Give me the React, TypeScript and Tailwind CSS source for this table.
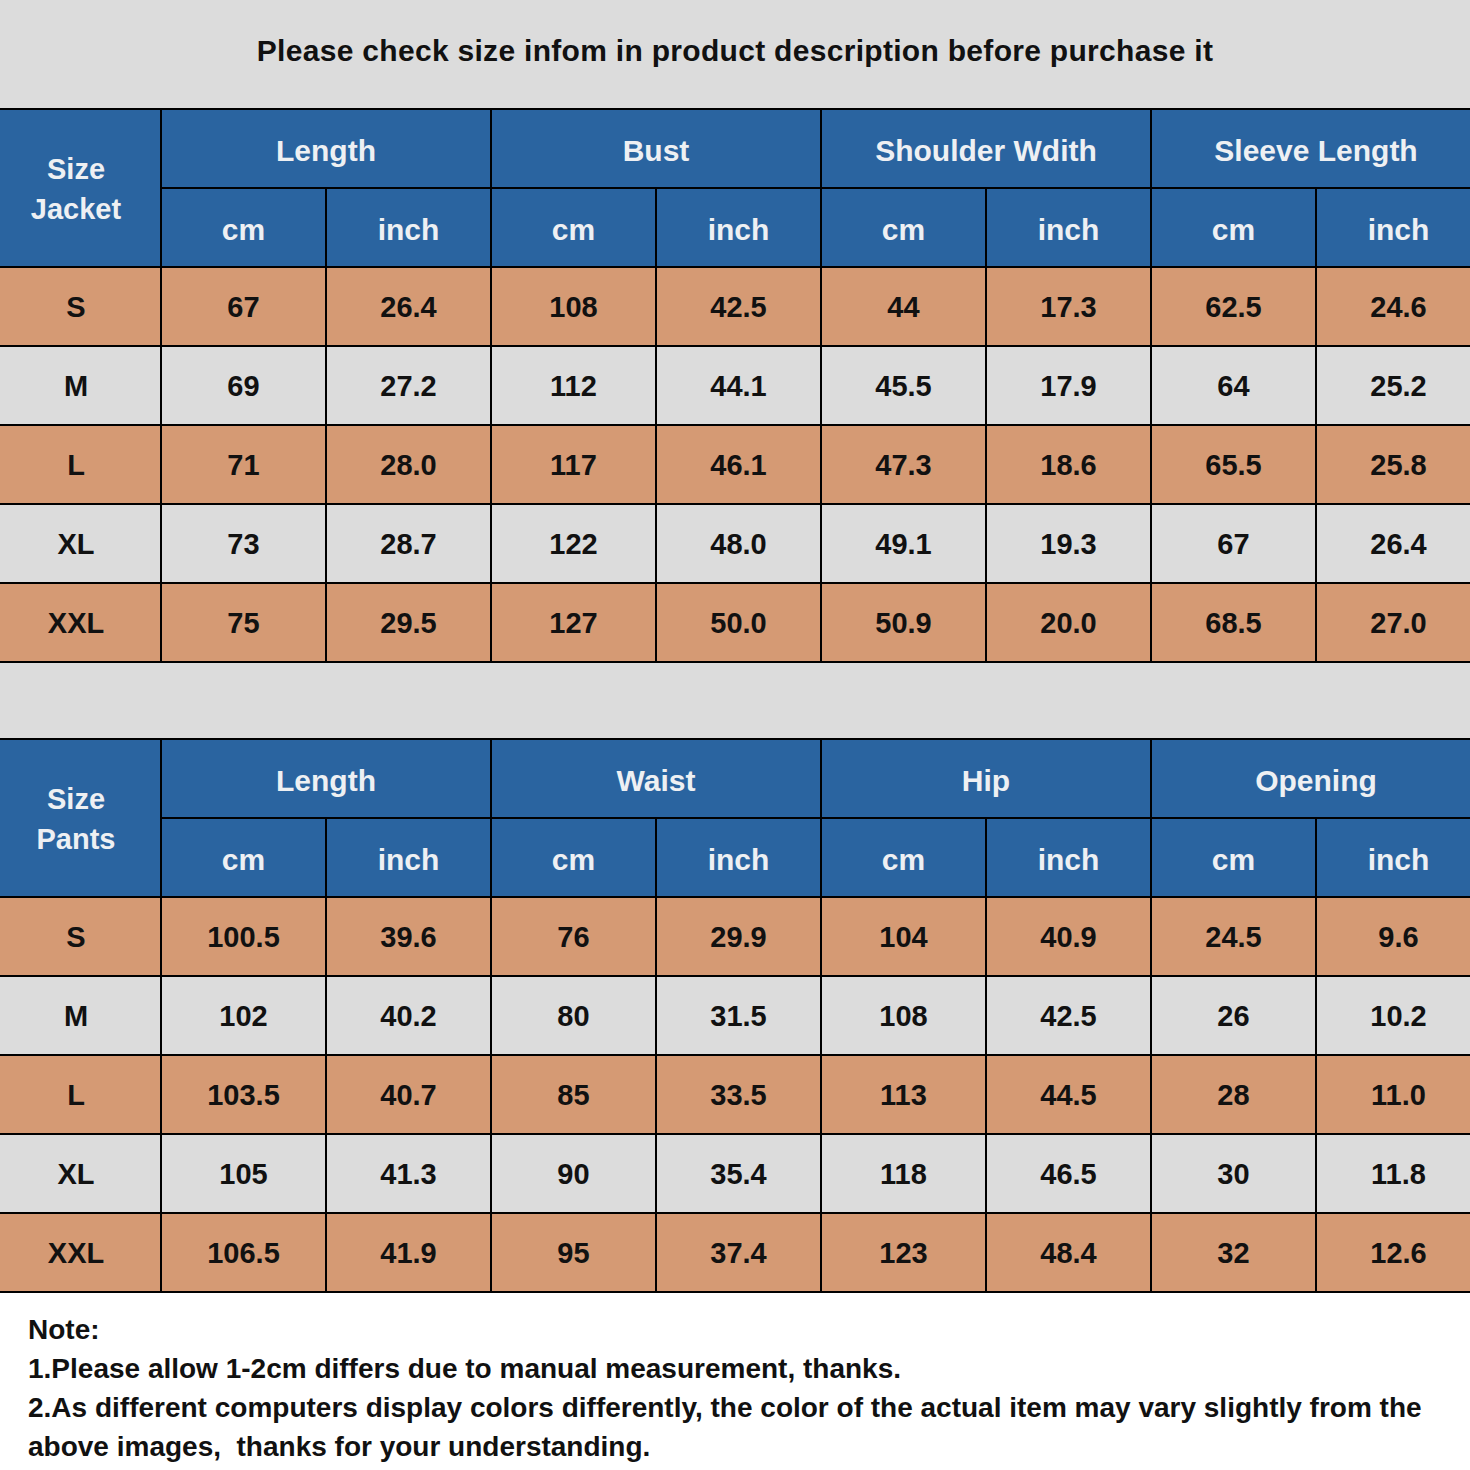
const jacketHeads = ["Length", "Bust", "Shoulder Wdith", "Sleeve Length"];
const pantsHeads = ["Length", "Waist", "Hip", "Opening"];

const jacketRows = [
  ["S", "67", "26.4", "108", "42.5", "44", "17.3", "62.5", "24.6"],
  ["M", "69", "27.2", "112", "44.1", "45.5", "17.9", "64", "25.2"],
  ["L", "71", "28.0", "117", "46.1", "47.3", "18.6", "65.5", "25.8"],
  ["XL", "73", "28.7", "122", "48.0", "49.1", "19.3", "67", "26.4"],
  ["XXL", "75", "29.5", "127", "50.0", "50.9", "20.0", "68.5", "27.0"],
];

const pantsRows = [
  ["S", "100.5", "39.6", "76", "29.9", "104", "40.9", "24.5", "9.6"],
  ["M", "102", "40.2", "80", "31.5", "108", "42.5", "26", "10.2"],
  ["L", "103.5", "40.7", "85", "33.5", "113", "44.5", "28", "11.0"],
  ["XL", "105", "41.3", "90", "35.4", "118", "46.5", "30", "11.8"],
  ["XXL", "106.5", "41.9", "95", "37.4", "123", "48.4", "32", "12.6"],
];

function SizeTable({ kind, heads, rows }: { kind: string; heads: string[]; rows: string[][] }) {
  return (
    <div className="w-[1470px] overflow-hidden">
      <div className="grid w-[1480px] grid-cols-[160px_repeat(8,163px)] auto-rows-[77px] gap-[2px] bg-black py-[2px] text-[29px] font-bold">
        <div className="row-span-2 flex flex-col items-center justify-center bg-[#2a64a0] pr-[8px] pt-[2px] leading-[40px] text-[#eef0f3]">
          <span>Size</span>
          <span>{kind}</span>
        </div>
        {heads.map((h) => (
          <div key={h} className="col-span-2 flex items-center justify-center bg-[#2a64a0] pt-[4px] text-[30px] text-[#eef0f3]">
            {h}
          </div>
        ))}
        {heads.map((h) => (
          <>
            <div key={h + "cm"} className="flex items-center justify-center bg-[#2a64a0] pt-[3px] text-[30px] text-[#eef0f3]">
              cm
            </div>
            <div key={h + "in"} className="flex items-center justify-center bg-[#2a64a0] pt-[3px] text-[30px] text-[#eef0f3]">
              inch
            </div>
          </>
        ))}
        {rows.map((r, i) =>
          r.map((c, j) => (
            <div
              key={i + "-" + j}
              className={`flex items-center justify-center pt-[2px] text-[#111] ${j === 0 ? "pr-[8px]" : ""} ${i % 2 === 0 ? "bg-[#d59a74]" : "bg-[#dcdcdc]"}`}
            >
              {c}
            </div>
          ))
        )}
      </div>
    </div>
  );
}

export default function App() {
  return (
    <div className="w-[1470px] h-[1470px] overflow-hidden bg-white font-['Liberation_Sans',Arial,sans-serif]">
      <div className="flex h-[108px] items-start justify-center bg-[#dcdcdc] pt-[28px] text-[30px] font-bold tracking-[0.3px] text-[#111]">
        Please check size infom in product description before purchase it
      </div>
      <SizeTable kind="Jacket" heads={jacketHeads} rows={jacketRows} />
      <div className="h-[75px] bg-[#dcdcdc]" />
      <SizeTable kind="Pants" heads={pantsHeads} rows={pantsRows} />
      <div className="px-[28px] pt-[17px] text-[28px] font-bold leading-[39px] text-[#111]">
        <div>Note:</div>
        <div>1.Please allow 1-2cm differs due to manual measurement, thanks.</div>
        <div>2.As different computers display colors differently, the color of the actual item may vary slightly from the</div>
        <div>above images,&nbsp; thanks for your understanding.</div>
      </div>
    </div>
  );
}
